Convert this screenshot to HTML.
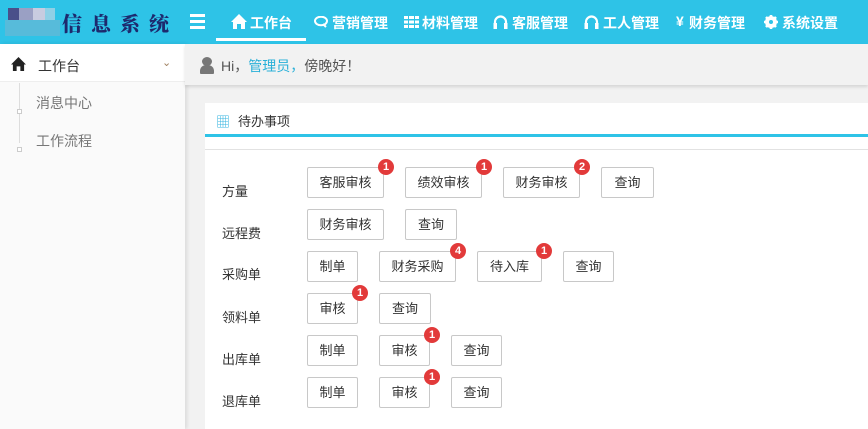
<!DOCTYPE html>
<html><head><meta charset="utf-8"><style>
*{margin:0;padding:0;box-sizing:border-box}
body{width:868px;height:429px;overflow:hidden;background:#f2f2f2;font-family:"Liberation Sans","Noto Sans CJK SC",sans-serif;font-size:14px;color:#333;position:relative}
.hd{position:absolute;left:0;top:0;width:868px;height:44px;background:#2ec3e7;color:#fff}
.logo{position:absolute;left:0;top:0;width:60px;height:40px}
.title{position:absolute;left:62px;top:8px;font-family:"Noto Serif CJK SC",serif;font-weight:900;font-size:20px;color:#1d2a6e;letter-spacing:9px}
.nav{position:absolute;top:13px;font-size:14px;font-weight:bold;white-space:nowrap}
.ic{position:absolute;top:14px}
.side{position:absolute;left:0;top:44px;width:185px;height:385px;background:#fafafa;box-shadow:2px 0 4px rgba(0,0,0,.1)}
.greet{position:absolute;left:185px;top:44px;width:683px;height:41px;background:#f2f2f2;box-shadow:0 2px 3px rgba(0,0,0,.12)}
.panel{position:absolute;left:205px;top:103px;width:663px;height:326px;background:#fff}
.btn{position:absolute;height:31px;border:1px solid #c8c8c8;border-radius:2px;background:#fff;font-size:13px;line-height:29px;text-align:center;color:#333}
.b{position:absolute;right:-11px;top:-9px;width:16px;height:16px;border-radius:50%;background:#e23a3a;color:#fff;font-size:11px;font-weight:bold;line-height:16px;text-align:center}
.lb{position:absolute;left:17px;font-size:13px;color:#333}
</style></head><body>
<div class="hd">
 <div class="logo">
  <div style="position:absolute;left:8px;top:8px;width:11px;height:12px;background:#4a4f8a"></div>
  <div style="position:absolute;left:19px;top:8px;width:14px;height:12px;background:#9aa0c4"></div>
  <div style="position:absolute;left:33px;top:8px;width:12px;height:12px;background:#c8cce0"></div>
  <div style="position:absolute;left:45px;top:8px;width:10px;height:12px;background:#8fd0e6"></div>
  <div style="position:absolute;left:5px;top:20px;width:55px;height:16px;background:#6ab8d4;opacity:.7"></div>
 </div>
 <div class="title">信息系统</div>
 <div style="position:absolute;left:190px;top:14px;width:15px;height:3px;background:#fff;box-shadow:0 6px 0 #fff,0 12px 0 #fff"></div>
 <svg class="ic" style="left:231px" width="16" height="15" viewBox="0 0 16 15"><path d="M8 0L0 8h2v7h4v-5h4v5h4V8h2z" fill="#fff"/></svg>
 <div class="nav" style="left:250px">工作台</div>
 <div style="position:absolute;left:216px;top:38px;width:90px;height:3px;background:#fff"></div>
 <svg class="ic" style="left:314px;top:16px" width="14" height="12" viewBox="0 0 14 12"><ellipse cx="7" cy="5" rx="6" ry="4.3" fill="none" stroke="#fff" stroke-width="2"/><path d="M9 8l3 3" stroke="#fff" stroke-width="2"/></svg>
 <div class="nav" style="left:332px">营销管理</div>
 <svg class="ic" style="left:404px;top:16px" width="15" height="12" viewBox="0 0 15 12"><g fill="#fff"><rect x="0" y="0" width="4" height="3"/><rect x="5" y="0" width="5" height="3"/><rect x="11" y="0" width="4" height="3"/><rect x="0" y="4.5" width="4" height="3"/><rect x="5" y="4.5" width="5" height="3"/><rect x="11" y="4.5" width="4" height="3"/><rect x="0" y="9" width="4" height="3"/><rect x="5" y="9" width="5" height="3"/><rect x="11" y="9" width="4" height="3"/></g></svg>
 <div class="nav" style="left:422px">材料管理</div>
 <svg class="ic" style="left:493px;top:15px" width="15" height="14" viewBox="0 0 15 14"><path d="M2 13V7a5.5 5.5 0 0 1 11 0v6" fill="none" stroke="#fff" stroke-width="2.2"/><rect x="0.5" y="8" width="3.5" height="6" fill="#fff"/><rect x="11" y="8" width="3.5" height="6" fill="#fff"/></svg>
 <div class="nav" style="left:512px">客服管理</div>
 <svg class="ic" style="left:584px;top:15px" width="15" height="14" viewBox="0 0 15 14"><path d="M2 13V7a5.5 5.5 0 0 1 11 0v6" fill="none" stroke="#fff" stroke-width="2.2"/><rect x="0.5" y="8" width="3.5" height="6" fill="#fff"/><rect x="11" y="8" width="3.5" height="6" fill="#fff"/></svg>
 <div class="nav" style="left:603px">工人管理</div>
 <div class="nav" style="left:676px">¥</div>
 <div class="nav" style="left:689px">财务管理</div>
 <svg class="ic" style="left:764px;top:15px" width="14" height="14" viewBox="0 0 14 14"><circle cx="7" cy="7" r="4.5" fill="none" stroke="#fff" stroke-width="3"/><g stroke="#fff" stroke-width="2.6"><path d="M7 0v14M0 7h14M2 2l10 10M12 2L2 12"/></g><circle cx="7" cy="7" r="2" fill="#2ec3e7"/></svg>
 <div class="nav" style="left:782px">系统设置</div>
</div>
<div class="side">
 <div style="position:absolute;left:0;top:0;width:185px;height:38px;background:#fff;border-bottom:1px solid #eee"></div>
 <svg style="position:absolute;left:11px;top:13px" width="15" height="14" viewBox="0 0 16 15"><path d="M8 0L0 8h2v7h4v-5h4v5h4V8h2z" fill="#222"/></svg>
 <div style="position:absolute;left:38px;top:12px;color:#333">工作台</div>
 <div style="position:absolute;left:162px;top:12px;color:#a08060;font-size:11px">⌄</div>
 <div style="position:absolute;left:19px;top:39px;width:1px;height:60px;background:#ddd"></div>
 <div style="position:absolute;left:17px;top:65px;width:5px;height:5px;border:1px solid #ccc;background:#fff"></div>
 <div style="position:absolute;left:17px;top:103px;width:5px;height:5px;border:1px solid #ccc;background:#fff"></div>
 <div style="position:absolute;left:36px;top:49px;color:#777">消息中心</div>
 <div style="position:absolute;left:36px;top:87px;color:#777">工作流程</div>
</div>
<div class="greet">
 <div style="position:absolute;left:17px;top:13px;width:10px;height:9px;border-radius:50%;background:#777"></div>
 <div style="position:absolute;left:15px;top:21px;width:14px;height:9px;border-radius:6px 6px 1px 1px;background:#777"></div>
 <div style="position:absolute;left:36px;top:12px;color:#555">Hi，<span style="color:#2ab0d8">管理员，</span>傍晚好！</div>
</div>
<div class="panel">
 <div style="position:absolute;left:11px;top:9px;color:#38b6e0;font-size:14px">▦</div>
 <div style="position:absolute;left:33px;top:8px;font-size:13px">待办事项</div>
 <div style="position:absolute;left:0;top:31px;width:663px;height:3px;background:#2ec3e7"></div>
 <div style="position:absolute;left:0;top:46px;width:663px;height:1px;background:#e2e2e2"></div>

 <div class="lb" style="top:78px">方量</div>
 <div class="btn" style="left:102px;top:64px;width:77px">客服审核<span class="b">1</span></div>
 <div class="btn" style="left:200px;top:64px;width:77px">绩效审核<span class="b">1</span></div>
 <div class="btn" style="left:298px;top:64px;width:77px">财务审核<span class="b">2</span></div>
 <div class="btn" style="left:396px;top:64px;width:53px">查询</div>

 <div class="lb" style="top:120px">远程费</div>
 <div class="btn" style="left:102px;top:106px;width:77px">财务审核</div>
 <div class="btn" style="left:200px;top:106px;width:52px">查询</div>

 <div class="lb" style="top:161px">采购单</div>
 <div class="btn" style="left:102px;top:148px;width:51px">制单</div>
 <div class="btn" style="left:174px;top:148px;width:77px">财务采购<span class="b">4</span></div>
 <div class="btn" style="left:272px;top:148px;width:65px">待入库<span class="b">1</span></div>
 <div class="btn" style="left:358px;top:148px;width:51px">查询</div>

 <div class="lb" style="top:204px">领料单</div>
 <div class="btn" style="left:102px;top:190px;width:51px">审核<span class="b">1</span></div>
 <div class="btn" style="left:174px;top:190px;width:52px">查询</div>

 <div class="lb" style="top:246px">出库单</div>
 <div class="btn" style="left:102px;top:232px;width:51px">制单</div>
 <div class="btn" style="left:174px;top:232px;width:51px">审核<span class="b">1</span></div>
 <div class="btn" style="left:246px;top:232px;width:51px">查询</div>

 <div class="lb" style="top:288px">退库单</div>
 <div class="btn" style="left:102px;top:274px;width:51px">制单</div>
 <div class="btn" style="left:174px;top:274px;width:51px">审核<span class="b">1</span></div>
 <div class="btn" style="left:246px;top:274px;width:51px">查询</div>
</div>
</body></html>
